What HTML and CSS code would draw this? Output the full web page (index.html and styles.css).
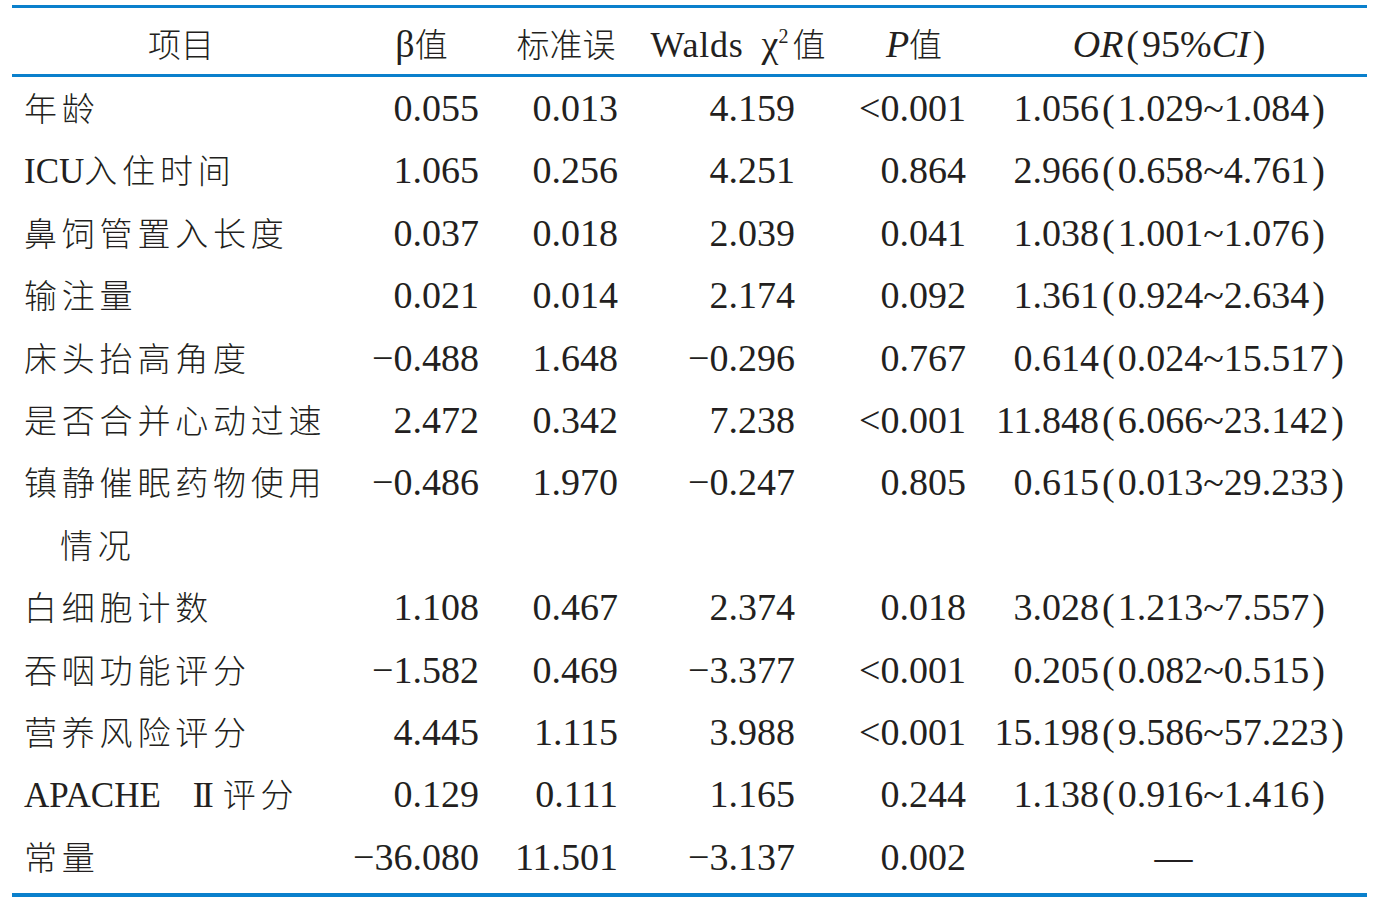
FILE: index.html
```html
<!DOCTYPE html>
<html lang="zh-CN">
<head>
<meta charset="utf-8">
<title>多因素Logistic回归分析</title>
<link rel="stylesheet" href="styles.css">
</head>
<body>
<div class="tbl">
  <div class="row head">
    <div class="c c1 h"><span class="cjk">项目</span></div>
    <div class="c h">β<span class="cjk">值</span></div>
    <div class="c h"><span class="cjk">标准误</span></div>
    <div class="c h hw"><span class="walds">Walds</span><span class="chi">χ</span><sup>2</sup><span class="cjk">值</span></div>
    <div class="c h"><i>P</i><span class="cjk">值</span></div>
    <div class="c c6 h"><i>OR</i><span class="lp">(</span>95%<i>CI</i><span class="rp">)</span></div>
  </div>
  <div class="body">
    <div class="row">
      <div class="c c1"><span class="cjk">年龄</span></div>
      <div class="c n n2">0.055</div><div class="c n n3">0.013</div><div class="c n n4">4.159</div><div class="c n n5">&lt;0.001</div>
      <div class="c c6 or"><span class="orv">1.056</span><span class="lp">(</span>1.029~1.084<span class="rp">)</span></div>
    </div>
    <div class="row">
      <div class="c c1"><span class="lat">ICU</span><span class="cjk">入住时间</span></div>
      <div class="c n n2">1.065</div><div class="c n n3">0.256</div><div class="c n n4">4.251</div><div class="c n n5">0.864</div>
      <div class="c c6 or"><span class="orv">2.966</span><span class="lp">(</span>0.658~4.761<span class="rp">)</span></div>
    </div>
    <div class="row">
      <div class="c c1"><span class="cjk">鼻饲管置入长度</span></div>
      <div class="c n n2">0.037</div><div class="c n n3">0.018</div><div class="c n n4">2.039</div><div class="c n n5">0.041</div>
      <div class="c c6 or"><span class="orv">1.038</span><span class="lp">(</span>1.001~1.076<span class="rp">)</span></div>
    </div>
    <div class="row">
      <div class="c c1"><span class="cjk">输注量</span></div>
      <div class="c n n2">0.021</div><div class="c n n3">0.014</div><div class="c n n4">2.174</div><div class="c n n5">0.092</div>
      <div class="c c6 or"><span class="orv">1.361</span><span class="lp">(</span>0.924~2.634<span class="rp">)</span></div>
    </div>
    <div class="row">
      <div class="c c1"><span class="cjk">床头抬高角度</span></div>
      <div class="c n n2">−0.488</div><div class="c n n3">1.648</div><div class="c n n4">−0.296</div><div class="c n n5">0.767</div>
      <div class="c c6 or"><span class="orv">0.614</span><span class="lp">(</span>0.024~15.517<span class="rp">)</span></div>
    </div>
    <div class="row">
      <div class="c c1"><span class="cjk">是否合并心动过速</span></div>
      <div class="c n n2">2.472</div><div class="c n n3">0.342</div><div class="c n n4">7.238</div><div class="c n n5">&lt;0.001</div>
      <div class="c c6 or"><span class="orv">11.848</span><span class="lp">(</span>6.066~23.142<span class="rp">)</span></div>
    </div>
    <div class="row two">
      <div class="c c1 wrap"><span class="cjk">镇静催眠药物使用</span><br><span class="cjk">情况</span></div>
      <div class="c n n2">−0.486</div><div class="c n n3">1.970</div><div class="c n n4">−0.247</div><div class="c n n5">0.805</div>
      <div class="c c6 or"><span class="orv">0.615</span><span class="lp">(</span>0.013~29.233<span class="rp">)</span></div>
    </div>
    <div class="row">
      <div class="c c1"><span class="cjk">白细胞计数</span></div>
      <div class="c n n2">1.108</div><div class="c n n3">0.467</div><div class="c n n4">2.374</div><div class="c n n5">0.018</div>
      <div class="c c6 or"><span class="orv">3.028</span><span class="lp">(</span>1.213~7.557<span class="rp">)</span></div>
    </div>
    <div class="row">
      <div class="c c1"><span class="cjk">吞咽功能评分</span></div>
      <div class="c n n2">−1.582</div><div class="c n n3">0.469</div><div class="c n n4">−3.377</div><div class="c n n5">&lt;0.001</div>
      <div class="c c6 or"><span class="orv">0.205</span><span class="lp">(</span>0.082~0.515<span class="rp">)</span></div>
    </div>
    <div class="row">
      <div class="c c1"><span class="cjk">营养风险评分</span></div>
      <div class="c n n2">4.445</div><div class="c n n3">1.115</div><div class="c n n4">3.988</div><div class="c n n5">&lt;0.001</div>
      <div class="c c6 or"><span class="orv">15.198</span><span class="lp">(</span>9.586~57.223<span class="rp">)</span></div>
    </div>
    <div class="row">
      <div class="c c1"><span class="lat">APACHE</span><span class="roman">II</span><span class="cjk">评分</span></div>
      <div class="c n n2">0.129</div><div class="c n n3">0.111</div><div class="c n n4">1.165</div><div class="c n n5">0.244</div>
      <div class="c c6 or"><span class="orv">1.138</span><span class="lp">(</span>0.916~1.416<span class="rp">)</span></div>
    </div>
    <div class="row">
      <div class="c c1"><span class="cjk">常量</span></div>
      <div class="c n n2">−36.080</div><div class="c n n3">11.501</div><div class="c n n4">−3.137</div><div class="c n n5">0.002</div>
      <div class="c c6 dash">—</div>
    </div>
  </div>
</div>
</body>
</html>
```

FILE: styles.css
```css
html, body {
  margin: 0;
  padding: 0;
  background: #ffffff;
}

body {
  font-family: "Liberation Serif", "Noto Sans CJK SC", serif;
  font-size: 38px;
  color: #231f20;
}

.tbl {
  margin: 5px 0 0 12px;
  width: 1355px;
  border-top: 3px solid #0a80cc;
  border-bottom: 4px solid #0a80cc;
}

.row {
  display: grid;
  grid-template-columns: 338px 143px 146px 204px 142px 1fr;
  height: 62.4px;
  line-height: 62.4px;
}

.row.two {
  height: 124.8px;
}

.head {
  height: 69px;
  padding-top: 7px;
  box-sizing: border-box;
  line-height: 59px;
  border-bottom: 3px solid #0a80cc;
}

.body {
  padding-bottom: 5px;
}

.c {
  white-space: nowrap;
}

.h {
  text-align: center;
}

.head .c1 {
  padding-right: 12px;
}

.head .hw {
  padding-right: 6px;
}

.head .c6 {
  padding-right: 11px;
}

.cjk {
  font-family: "Noto Sans CJK SC", sans-serif;
  font-weight: 300;
  font-size: 33px;
  line-height: 1;
  letter-spacing: 4.8px;
}

.h .cjk {
  letter-spacing: 2px;
}

.h .cjk:last-child {
  letter-spacing: 0;
}

.walds {
  font-size: 36px;
  letter-spacing: 0.8px;
}

.chi {
  margin-left: 18px;
}

sup {
  font-size: 20px;
  line-height: 0;
  vertical-align: 14px;
  margin-right: 4px;
}

.c1 {
  padding-left: 12px;
}

.lat {
  font-size: 35px;
}

.roman {
  font-size: 36px;
  letter-spacing: -3px;
  margin: 0 12px 0 32px;
}

.wrap .cjk + br + .cjk {
  margin-left: 36px;
}

.n {
  text-align: right;
}

.n2 { padding-right: 14px; }
.n3 { padding-right: 21px; }
.n4 { padding-right: 48px; }
.n5 { padding-right: 19px; }

.or {
  padding-left: 9px;
}

.orv {
  display: inline-block;
  width: 105px;
  text-align: right;
}

.lp, .rp {
  margin: 0 3px;
}

.dash {
  text-align: center;
  padding-right: 5px;
}
```
